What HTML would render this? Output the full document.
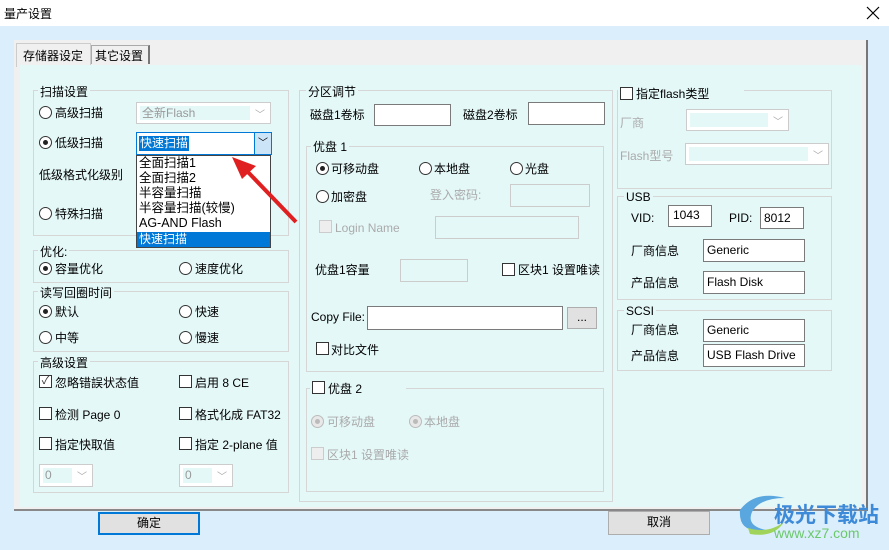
<!DOCTYPE html>
<html><head><meta charset="utf-8"><style>
*{box-sizing:border-box;margin:0;padding:0}
body{width:889px;height:550px;position:relative;overflow:hidden;background:#dbeefc;font-family:"Liberation Sans","Noto Sans CJK SC",sans-serif;font-size:12px;color:#000}
.a{position:absolute;white-space:nowrap}
.g{position:absolute;border:1px solid #d6d6d6}
.gl{position:absolute;background:#e5f8f8;padding:0 2px;line-height:14px}
.r{position:absolute;width:13px;height:13px;border:1px solid #333;border-radius:50%;background:#fff}
.r.on::after{content:"";position:absolute;left:3px;top:3px;width:5px;height:5px;border-radius:50%;background:#222}
.r.dis{border-color:#bbb;background:#e8e8e8}
.r.dis::after{content:"";position:absolute;left:3px;top:3px;width:5px;height:5px;border-radius:50%;background:#bbb}
.c{position:absolute;width:13px;height:13px;border:1px solid #333;background:#fff}
.c.dis{border-color:#ccc;background:#eee}
.t{position:absolute;background:#fff;border:1px solid #7a7a7a}
.td{position:absolute;border:1px solid #ccc}
.dis-t{color:#aaa}
.cb{position:absolute;border:1px solid #ccc;background:#fff}
.cb .in{position:absolute;left:3px;top:3px;bottom:3px;right:20px;background:#e5f8f8;color:#999;padding-left:2px;line-height:15px}
.cb .ar{position:absolute;right:5px;top:3px;color:#aaa;font-size:10px}
.lbl{line-height:16px}
.btn{position:absolute;background:#e1e1e1;border:1px solid #adadad;text-align:center;line-height:20px}
</style></head><body>
<div class="a" style="left:0;top:0;width:889px;height:26px;background:#fff"></div>
<div class="a" style="left:4px;top:5px;font-size:12px">量产设置</div>
<svg class="a" style="left:866px;top:6px" width="14" height="14"><path d="M1 1L13 13M13 1L1 13" stroke="#000" stroke-width="1.2"/></svg>
<!-- tab control -->
<div class="a" style="left:14px;top:40px;width:854px;height:471px;border-right:2px solid #777;border-bottom:2px solid #888;background:#f0f0f0"></div>
<div class="a" style="left:16px;top:43px;width:75px;height:24px;background:#f0f0f0;border:1px solid #ccc;border-bottom:none"></div>
<div class="a" style="left:23px;top:47px">存储器设定</div>
<div class="a" style="left:91px;top:45px;width:59px;height:19px;border:1px solid #aaa;border-bottom:none;border-right:2px solid #777"></div>
<div class="a" style="left:95px;top:47px">其它设置</div>
<div class="a" style="left:20px;top:65px;width:842px;height:442px;background:#e5f8f8"></div>

<!-- 扫描设置 -->
<div class="g" style="left:33px;top:90px;width:256px;height:146px"></div>
<div class="gl" style="left:38px;top:85px">扫描设置</div>
<div class="r" style="left:39px;top:106px"></div><div class="a lbl" style="left:55px;top:105px">高级扫描</div>
<div class="cb" style="left:136px;top:102px;width:135px;height:22px"><div class="in" style="color:#999">全新Flash</div><div class="ar">﹀</div></div>
<div class="r on" style="left:39px;top:136px"></div><div class="a lbl" style="left:55px;top:135px">低级扫描</div>
<div class="a" style="left:136px;top:132px;width:136px;height:23px;border:1px solid #0078d7;background:#fff"></div>
<div class="a" style="left:139px;top:136px;background:#0078d7;color:#fff;line-height:15px;padding:0 1px">快速扫描</div>
<div class="a" style="left:254px;top:133px;width:17px;height:21px;background:#cce4f7;border-left:1px solid #0078d7;text-align:center;font-size:10px;line-height:21px">﹀</div>
<div class="a" style="left:136px;top:155px;width:135px;height:93px;background:#fff;border:1px solid #444;line-height:15px;padding-left:2px;font-size:12.5px">全面扫描1<br>全面扫描2<br>半容量扫描<br>半容量扫描(较慢)<br>AG-AND Flash</div>
<div class="a" style="left:137px;top:232px;width:133px;height:15px;background:#0078d7;color:#fff;line-height:15px;padding-left:2px">快速扫描</div>
<div class="a lbl" style="left:39px;top:167px">低级格式化级别</div>
<div class="r" style="left:39px;top:207px"></div><div class="a lbl" style="left:55px;top:206px">特殊扫描</div>

<!-- 优化 -->
<div class="g" style="left:33px;top:250px;width:256px;height:33px"></div>
<div class="gl" style="left:38px;top:245px">优化:</div>
<div class="r on" style="left:39px;top:262px"></div><div class="a lbl" style="left:55px;top:261px">容量优化</div>
<div class="r" style="left:179px;top:262px"></div><div class="a lbl" style="left:195px;top:261px">速度优化</div>

<!-- 读写回圈时间 -->
<div class="g" style="left:33px;top:291px;width:256px;height:61px"></div>
<div class="gl" style="left:38px;top:286px">读写回圈时间</div>
<div class="r on" style="left:39px;top:305px"></div><div class="a lbl" style="left:55px;top:304px">默认</div>
<div class="r" style="left:179px;top:305px"></div><div class="a lbl" style="left:195px;top:304px">快速</div>
<div class="r" style="left:39px;top:331px"></div><div class="a lbl" style="left:55px;top:330px">中等</div>
<div class="r" style="left:179px;top:331px"></div><div class="a lbl" style="left:195px;top:330px">慢速</div>

<!-- 高级设置 -->
<div class="g" style="left:33px;top:361px;width:256px;height:132px"></div>
<div class="gl" style="left:38px;top:356px">高级设置</div>
<div class="c" style="left:39px;top:375px;color:#333;font-size:11px;line-height:11px;text-align:center">✓</div><div class="a lbl" style="left:55px;top:375px">忽略错誤状态值</div>
<div class="c" style="left:179px;top:375px"></div><div class="a lbl" style="left:195px;top:375px">启用 8 CE</div>
<div class="c" style="left:39px;top:407px"></div><div class="a lbl" style="left:55px;top:407px">检测 Page 0</div>
<div class="c" style="left:179px;top:407px"></div><div class="a lbl" style="left:195px;top:407px">格式化成 FAT32</div>
<div class="c" style="left:39px;top:437px"></div><div class="a lbl" style="left:55px;top:437px">指定快取值</div>
<div class="c" style="left:179px;top:437px"></div><div class="a lbl" style="left:195px;top:437px">指定 2-plane 值</div>
<div class="cb" style="left:39px;top:464px;width:54px;height:23px"><div class="in">0</div><div class="ar">﹀</div></div>
<div class="cb" style="left:179px;top:464px;width:54px;height:23px"><div class="in">0</div><div class="ar">﹀</div></div>

<!-- 分区调节 -->
<div class="g" style="left:299px;top:90px;width:314px;height:412px"></div>
<div class="gl" style="left:306px;top:85px">分区调节</div>
<div class="a lbl" style="left:310px;top:107px">磁盘1卷标</div>
<div class="t" style="left:374px;top:104px;width:77px;height:22px"></div>
<div class="a lbl" style="left:463px;top:107px">磁盘2卷标</div>
<div class="t" style="left:528px;top:102px;width:77px;height:23px"></div>

<div class="g" style="left:306px;top:146px;width:298px;height:226px"></div>
<div class="gl" style="left:311px;top:140px">优盘 1</div>
<div class="r on" style="left:316px;top:162px"></div><div class="a lbl" style="left:331px;top:161px">可移动盘</div>
<div class="r" style="left:419px;top:162px"></div><div class="a lbl" style="left:434px;top:161px">本地盘</div>
<div class="r" style="left:510px;top:162px"></div><div class="a lbl" style="left:525px;top:161px">光盘</div>
<div class="r" style="left:316px;top:190px"></div><div class="a lbl" style="left:331px;top:189px">加密盘</div>
<div class="a lbl dis-t" style="left:430px;top:187px">登入密码:</div>
<div class="td" style="left:510px;top:184px;width:80px;height:23px"></div>
<div class="c dis" style="left:319px;top:220px"></div><div class="a lbl dis-t" style="left:335px;top:220px">Login Name</div>
<div class="td" style="left:435px;top:216px;width:144px;height:23px"></div>
<div class="a lbl" style="left:315px;top:262px">优盘1容量</div>
<div class="td" style="left:400px;top:259px;width:68px;height:23px"></div>
<div class="c" style="left:502px;top:263px"></div><div class="a lbl" style="left:518px;top:262px">区块1 设置唯读</div>
<div class="a lbl" style="left:311px;top:309px">Copy File:</div>
<div class="t" style="left:367px;top:306px;width:196px;height:24px"></div>
<div class="btn" style="left:567px;top:307px;width:30px;height:22px;background:#e1e1e1;line-height:18px">...</div>
<div class="c" style="left:316px;top:342px"></div><div class="a lbl" style="left:331px;top:342px">对比文件</div>

<div class="g" style="left:306px;top:388px;width:298px;height:104px"></div>
<div class="a" style="left:310px;top:380px;width:96px;height:16px;background:#e5f8f8"></div>
<div class="c" style="left:312px;top:381px"></div><div class="a lbl" style="left:328px;top:381px">优盘 2</div>
<div class="r dis" style="left:311px;top:415px"></div><div class="a lbl dis-t" style="left:327px;top:414px">可移动盘</div>
<div class="r dis" style="left:409px;top:415px"></div><div class="a lbl dis-t" style="left:424px;top:414px">本地盘</div>
<div class="c dis" style="left:311px;top:447px"></div><div class="a lbl dis-t" style="left:327px;top:447px">区块1 设置唯读</div>

<!-- right column -->
<div class="g" style="left:617px;top:90px;width:215px;height:99px"></div>
<div class="a" style="left:618px;top:84px;width:126px;height:16px;background:#e5f8f8"></div>
<div class="c" style="left:620px;top:87px"></div><div class="a lbl" style="left:636px;top:86px">指定flash类型</div>
<div class="a lbl dis-t" style="left:620px;top:115px">厂商</div>
<div class="cb" style="left:686px;top:109px;width:103px;height:22px"><div class="in"></div><div class="ar">﹀</div></div>
<div class="a lbl dis-t" style="left:620px;top:148px">Flash型号</div>
<div class="cb" style="left:685px;top:143px;width:144px;height:22px;border-color:#ccc"><div class="in"></div><div class="ar">﹀</div></div>

<div class="g" style="left:617px;top:196px;width:215px;height:104px"></div>
<div class="gl" style="left:624px;top:190px">USB</div>
<div class="a lbl" style="left:631px;top:210px">VID:</div>
<div class="t" style="left:668px;top:205px;width:44px;height:22px;padding:2px 4px">1043</div>
<div class="a lbl" style="left:729px;top:210px">PID:</div>
<div class="t" style="left:760px;top:207px;width:44px;height:22px;padding:3px 3px">8012</div>
<div class="a lbl" style="left:631px;top:243px">厂商信息</div>
<div class="t" style="left:703px;top:239px;width:102px;height:23px;padding:3px 3px">Generic</div>
<div class="a lbl" style="left:631px;top:275px">产品信息</div>
<div class="t" style="left:703px;top:271px;width:102px;height:23px;padding:3px 3px">Flash Disk</div>

<div class="g" style="left:617px;top:310px;width:215px;height:61px"></div>
<div class="gl" style="left:624px;top:304px">SCSI</div>
<div class="a lbl" style="left:631px;top:322px">厂商信息</div>
<div class="t" style="left:703px;top:319px;width:102px;height:23px;padding:3px 3px">Generic</div>
<div class="a lbl" style="left:631px;top:348px">产品信息</div>
<div class="t" style="left:703px;top:344px;width:102px;height:23px;padding:3px 3px">USB Flash Drive</div>

<!-- buttons -->
<div class="btn" style="left:98px;top:512px;width:102px;height:23px;border:2px solid #0078d7;line-height:19px">确定</div>
<div class="btn" style="left:608px;top:511px;width:102px;height:24px">取消</div>

<!-- arrow -->
<svg class="a" style="left:0;top:0" width="889" height="550">
<line x1="296" y1="222" x2="246" y2="170" stroke="#e02020" stroke-width="4"/>
<polygon points="232,157 256,166 242,179" fill="#e02020"/>
<path d="M740 510 q15-20 45-12 q-25 0-33 14 q-6 14 14 18 q-28 4-26-20z" fill="#5aa7e0"/>
<path d="M748 528 q20 6 36-6 q-10 16-34 12z" fill="#9fd35a"/>
</svg>
<div class="a" style="left:774px;top:499px;font-size:21px;font-weight:bold;color:#3d8ad8">极光下载站</div>
<div class="a" style="left:774px;top:525px;font-size:14px;color:#6bc86b">www.xz7.com</div>
</body></html>
